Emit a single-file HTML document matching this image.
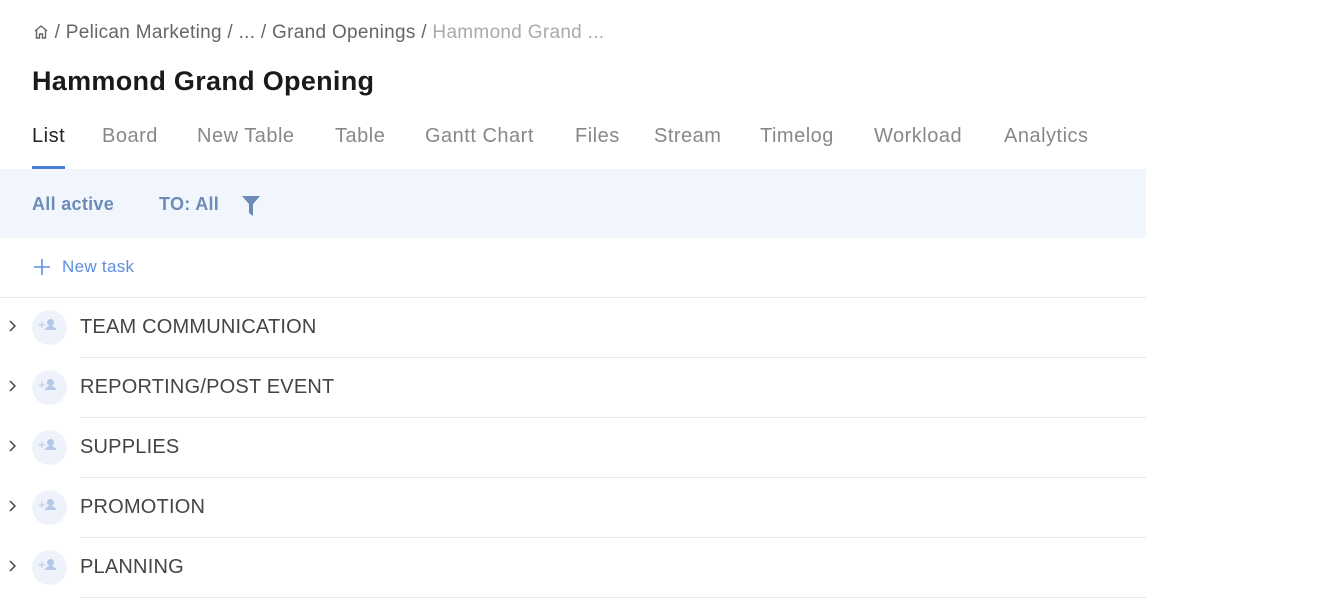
<!DOCTYPE html>
<html><head><meta charset="utf-8"><style>
*{margin:0;padding:0;box-sizing:border-box}
body{width:1342px;height:616px;background:#fff;font-family:"Liberation Sans",sans-serif;position:relative;overflow:hidden}
.a{position:absolute;white-space:nowrap}
.bc{top:22px;left:33px;font-size:19px;color:#666;letter-spacing:0.3px}
.bc .l{color:#aaa}
h1{position:absolute;top:66px;left:32px;font-size:27px;font-weight:bold;color:#1a1a1a;letter-spacing:0.3px}
.tab{top:125px;font-size:20px;color:#888;letter-spacing:0.5px}
.bar{position:absolute;left:0;top:169px;width:1146px;height:69px;background:#f1f6fc}
.f{top:194px;font-size:18px;font-weight:bold;color:#6b8bb8;letter-spacing:0.3px}
.row{position:absolute;left:0;width:1146px;height:60px}
.row .ln{position:absolute;left:80px;right:0;bottom:0;height:1px;background:#e6e6e6}
.row .c{position:absolute;left:8px;top:22px}
.row .av{position:absolute;left:32px;top:12px;width:35px;height:35px;border-radius:50%;background:#eef3fb}
.row .t{position:absolute;left:80px;top:18px;font-size:20px;color:#444;letter-spacing:0.2px}
.av::after{content:"+";position:absolute;left:6px;top:7px;font-size:13px;color:#b5c8e6}
.av::before{content:"";position:absolute;left:15px;top:9px;width:7px;height:7px;border-radius:50%;background:#b5c8e6;box-shadow:0 10px 0 3px #b5c8e6;clip-path:inset(0 -6px -4px -6px)}
</style></head><body>
<div class="a bc"><svg width="16" height="16" viewBox="0 0 16 16" style="vertical-align:-2px"><path d="M2 7L8 2l6 5M3.5 6v8h3v-4h3v4h3V6" fill="none" stroke="#666" stroke-width="1.4"/></svg> / Pelican Marketing / ... / Grand Openings / <span class="l">Hammond Grand ...</span></div>
<h1>Hammond Grand Opening</h1>
<div class="a tab" style="left:32px;color:#222">List</div>
<div class="a" style="left:32px;top:166px;width:33px;height:3px;background:#4a7fd8"></div>
<div class="a tab" style="left:102px">Board</div>
<div class="a tab" style="left:197px">New Table</div>
<div class="a tab" style="left:335px">Table</div>
<div class="a tab" style="left:425px">Gantt Chart</div>
<div class="a tab" style="left:575px">Files</div>
<div class="a tab" style="left:654px">Stream</div>
<div class="a tab" style="left:760px">Timelog</div>
<div class="a tab" style="left:874px">Workload</div>
<div class="a tab" style="left:1004px">Analytics</div>
<div class="bar"></div>
<div class="a f" style="left:32px">All active</div>
<div class="a f" style="left:159px">TO: All</div>
<svg class="a" style="left:242px;top:196px" width="18" height="20" viewBox="0 0 18 20"><path d="M0 0h18l-7 8v12l-4-3V8z" fill="#6b8bb8"/></svg>
<svg class="a" style="left:33px;top:258px" width="18" height="18" viewBox="0 0 18 18"><path d="M9 1v16M1 9h16" stroke="#5b8fe0" stroke-width="1.6"/></svg>
<div class="a" style="left:62px;top:257px;font-size:17px;color:#5b8fe0;letter-spacing:0.3px">New task</div>
<div class="a" style="left:0;top:297px;width:1146px;height:1px;background:#e6e6e6"></div>
<div class="row" style="top:298px"><svg class="c" width="8" height="12" viewBox="0 0 8 12"><path d="M2 1l5 5-5 5" fill="none" stroke="#444" stroke-width="1.5"/></svg><div class="av"></div><div class="t">TEAM COMMUNICATION</div><div class="ln"></div></div>
<div class="row" style="top:358px"><svg class="c" width="8" height="12" viewBox="0 0 8 12"><path d="M2 1l5 5-5 5" fill="none" stroke="#444" stroke-width="1.5"/></svg><div class="av"></div><div class="t">REPORTING/POST EVENT</div><div class="ln"></div></div>
<div class="row" style="top:418px"><svg class="c" width="8" height="12" viewBox="0 0 8 12"><path d="M2 1l5 5-5 5" fill="none" stroke="#444" stroke-width="1.5"/></svg><div class="av"></div><div class="t">SUPPLIES</div><div class="ln"></div></div>
<div class="row" style="top:478px"><svg class="c" width="8" height="12" viewBox="0 0 8 12"><path d="M2 1l5 5-5 5" fill="none" stroke="#444" stroke-width="1.5"/></svg><div class="av"></div><div class="t">PROMOTION</div><div class="ln"></div></div>
<div class="row" style="top:538px"><svg class="c" width="8" height="12" viewBox="0 0 8 12"><path d="M2 1l5 5-5 5" fill="none" stroke="#444" stroke-width="1.5"/></svg><div class="av"></div><div class="t">PLANNING</div><div class="ln"></div></div>
</body></html>
